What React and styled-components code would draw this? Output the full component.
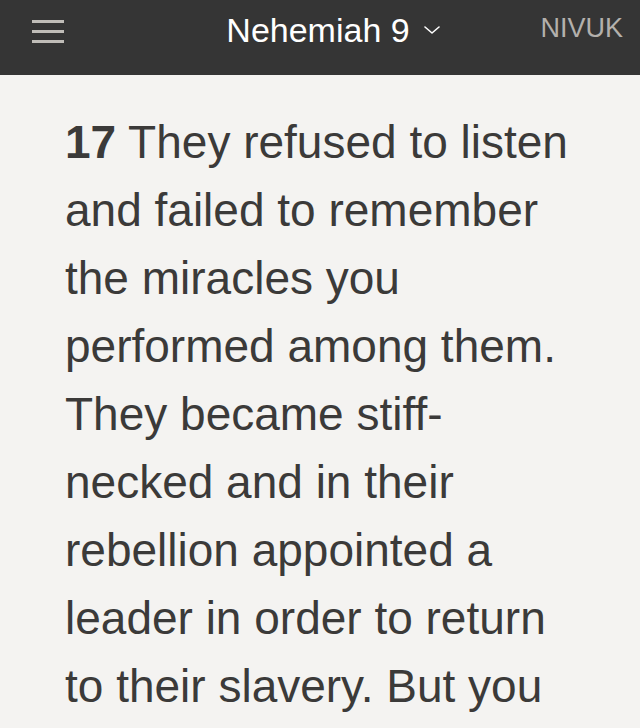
import React from 'react';
import styled, { createGlobalStyle } from 'styled-components';

const GlobalStyle = createGlobalStyle`
  html, body {
    margin: 0;
    padding: 0;
    background: #f4f3f1;
  }
  body {
    font-family: "Liberation Sans", Arial, sans-serif;
  }
`;

const Page = styled.div`
  width: 640px;
  height: 728px;
  overflow: hidden;
  background: #f4f3f1;
`;

const Header = styled.header`
  height: 75px;
  background: #353535;
  display: grid;
  grid-template-columns: 1fr auto 1fr;
  align-items: start;
`;

const MenuButton = styled.div`
  display: flex;
  flex-direction: column;
  gap: 7px;
  padding: 20px 0 0 32px;
`;

const MenuBar = styled.span`
  display: block;
  width: 32px;
  height: 3px;
  background: #c0bdb8;
`;

const Title = styled.div`
  display: flex;
  align-items: center;
  gap: 14px;
  padding: 11px 0 0 26px;
  color: #ffffff;
  font-size: 34px;
  line-height: 38px;
  white-space: nowrap;
`;

const Version = styled.div`
  justify-self: end;
  padding: 13px 17px 0 0;
  color: #b3b0ac;
  font-size: 27px;
  line-height: 30px;
`;

const Reading = styled.main`
  padding: 33px 70px 0 65px;
`;

const Verse = styled.p`
  margin: 0;
  color: #3b3a39;
  font-size: 46px;
  line-height: 68px;
`;

const VerseNumber = styled.b`
  font-weight: bold;
`;

function Chevron() {
  return (
    <svg width="16" height="8" viewBox="0 0 16 8" fill="none">
      <path d="M1 1 L8 7 L15 1" stroke="#ffffff" strokeWidth="1.6" strokeLinecap="round" strokeLinejoin="round" />
    </svg>
  );
}

export default function App() {
  return (
    <Page>
      <GlobalStyle />
      <Header>
        <MenuButton>
          <MenuBar />
          <MenuBar />
          <MenuBar />
        </MenuButton>
        <Title>
          Nehemiah 9
          <Chevron />
        </Title>
        <Version>NIVUK</Version>
      </Header>
      <Reading>
        <Verse>
          <VerseNumber>17</VerseNumber> They refused to listen and failed to remember the
          miracles you performed among them. They became stiff-necked and in their
          rebellion appointed a leader in order to return to their slavery. But you are a
          forgiving God, gracious and compassionate, slow to anger and abounding in love.
        </Verse>
      </Reading>
    </Page>
  );
}
